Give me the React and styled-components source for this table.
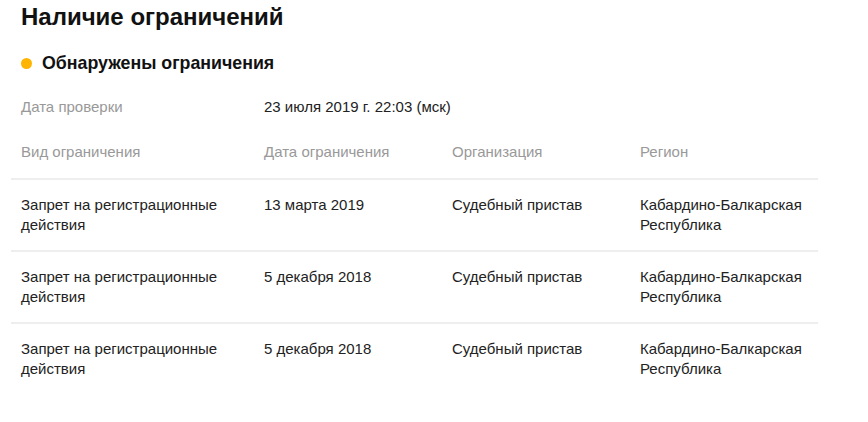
import React from 'react';
import styled, { createGlobalStyle } from 'styled-components';

const GlobalStyle = createGlobalStyle`
  body {
    margin: 0;
    background: #ffffff;
    font-family: "Liberation Sans", Arial, sans-serif;
    color: #222222;
  }
`;

const Page = styled.div`
  width: 868px;
  padding: 0 0 0 11px;
  box-sizing: border-box;
`;

const Title = styled.h2`
  margin: 0;
  padding: 3px 0 0 10px;
  font-size: 24px;
  line-height: 28px;
  font-weight: 700;
  color: #111111;
`;

const Status = styled.div`
  display: flex;
  align-items: center;
  gap: 10px;
  margin-top: 21px;
  padding-left: 10px;
  font-size: 17.8px;
  line-height: 22px;
  font-weight: 700;
  color: #111111;
`;

const Dot = styled.span`
  width: 11px;
  height: 11px;
  border-radius: 50%;
  background: ${({ $color }) => $color};
`;

const Table = styled.div`
  width: 807px;
  margin-top: 23px;
`;

const Row = styled.div`
  display: grid;
  grid-template-columns: 243px 188px 188px 188px;
  border-bottom: ${({ $divider }) => ($divider ? '2px solid #eeeeee' : 'none')};
  padding: ${({ $pad }) => $pad};
`;

const Cell = styled.div`
  padding-left: 10px;
  font-size: 15px;
  line-height: 20px;
  color: ${({ $muted }) => ($muted ? '#999999' : '#222222')};
`;

const CheckRow = styled.div`
  display: grid;
  grid-template-columns: 243px 1fr;
  padding: 0 0 25px;
`;

const rows = [
  ['Запрет на регистрационные действия', '13 марта 2019', 'Судебный пристав', 'Кабардино-Балкарская Республика'],
  ['Запрет на регистрационные действия', '5 декабря 2018', 'Судебный пристав', 'Кабардино-Балкарская Республика'],
  ['Запрет на регистрационные действия', '5 декабря 2018', 'Судебный пристав', 'Кабардино-Балкарская Республика'],
];

export default function App() {
  return (
    <>
      <GlobalStyle />
      <Page>
        <Title>Наличие ограничений</Title>
        <Status>
          <Dot $color="#ffb400" />
          Обнаружены ограничения
        </Status>
        <Table>
          <CheckRow>
            <Cell $muted>Дата проверки</Cell>
            <Cell>23 июля 2019 г. 22:03 (мск)</Cell>
          </CheckRow>
          <Row $divider $pad="0 0 16px">
            <Cell $muted>Вид ограничения</Cell>
            <Cell $muted>Дата ограничения</Cell>
            <Cell $muted>Организация</Cell>
            <Cell $muted>Регион</Cell>
          </Row>
          {rows.map((r, i) => (
            <Row key={i} $divider={i < rows.length - 1} $pad="15px 0 15px">
              {r.map((c, j) => (
                <Cell key={j}>{c}</Cell>
              ))}
            </Row>
          ))}
        </Table>
      </Page>
    </>
  );
}
